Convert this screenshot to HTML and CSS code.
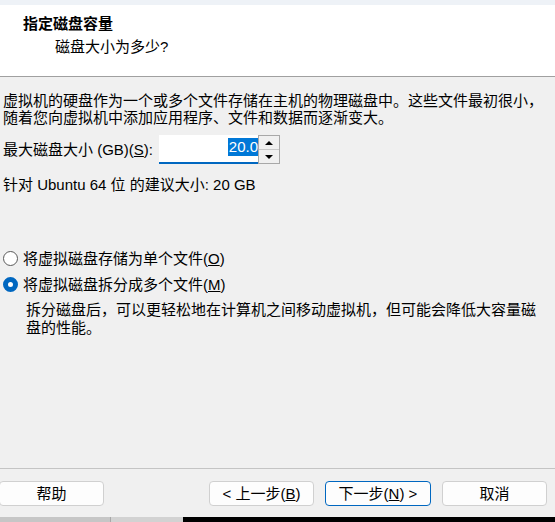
FILE: index.html
```html
<!DOCTYPE html>
<html lang="zh-CN">
<head>
<meta charset="utf-8">
<title>指定磁盘容量</title>
<link rel="stylesheet" href="styles.css">
</head>
<body>
<div class="dialog">
  <div class="topstrip"></div>
  <div class="header">
    <div class="title">指定磁盘容量</div>
    <div class="subtitle">磁盘大小为多少?</div>
  </div>
  <div class="content">
    <p class="para">虚拟机的硬盘作为一个或多个文件存储在主机的物理磁盘中。这些文件最初很小，<br>随着您向虚拟机中添加应用程序、文件和数据而逐渐变大。</p>
    <div class="spinrow">
      <span class="spinlabel">最大磁盘大小 (GB)(<u>S</u>):</span>
      <div class="spin">
        <div class="spininput"><span class="sel">20.0</span></div>
        <div class="spinbtns">
          <div class="spinbtn"><span class="tri up"></span></div>
          <div class="spinbtn"><span class="tri down"></span></div>
        </div>
      </div>
    </div>
    <p class="rec">针对 Ubuntu 64 位 的建议大小: 20 GB</p>
    <div class="radios">
      <label class="radio"><span class="dot"></span><span>将虚拟磁盘存储为单个文件(<u>O</u>)</span></label>
      <label class="radio"><span class="dot on"></span><span>将虚拟磁盘拆分成多个文件(<u>M</u>)</span></label>
      <p class="desc">拆分磁盘后，可以更轻松地在计算机之间移动虚拟机，但可能会降低大容量磁<br>盘的性能。</p>
    </div>
  </div>
  <div class="footer">
    <button class="btn help">帮助</button>
    <div class="navbtns">
      <button class="btn">&lt; 上一步(<u>B</u>)</button>
      <button class="btn default">下一步(<u>N</u>) &gt;</button>
      <button class="btn">取消</button>
    </div>
  </div>
</div>
<div class="taskstrip">
  <div class="seg a"></div>
  <div class="seg b"></div>
  <div class="seg c"></div>
</div>
</body>
</html>
```

FILE: styles.css
```css
html, body {
  margin: 0;
  padding: 0;
}
body {
  width: 555px;
  height: 522px;
  overflow: hidden;
  background: #f0f0f0;
  font-family: "Liberation Sans", "Noto Sans CJK SC", sans-serif;
  font-size: 15px;
  color: #000;
}
.dialog {
  height: 517px;
  display: flex;
  flex-direction: column;
}
.topstrip {
  height: 5px;
  background: #eef2f7;
}
.header {
  height: 72px;
  background: #fff;
  border-bottom: 1px solid #a0a0a0;
  box-sizing: border-box;
  padding-top: 9px;
}
.title {
  font-weight: bold;
  line-height: 20px;
  padding-left: 23px;
}
.subtitle {
  line-height: 20px;
  margin-top: 3px;
  padding-left: 55px;
}
.content {
  flex: 1;
  padding-left: 3px;
}
.para {
  margin: 15px 0 0 0;
  line-height: 17px;
}
.spinrow {
  display: flex;
  align-items: center;
  margin-top: 9px;
}
.spinlabel {
  width: 156px;
  line-height: 17px;
}
.spin {
  display: flex;
}
.spininput {
  width: 99px;
  height: 29px;
  box-sizing: border-box;
  background: #fff;
  border-bottom: 2px solid #0067c0;
  display: flex;
  justify-content: flex-end;
  align-items: flex-start;
  padding-top: 3px;
}
.sel {
  background: #0078d7;
  color: #fff;
  line-height: 18px;
  padding: 0 0 0 1px;
}
.spinbtns {
  width: 22px;
  height: 29px;
  box-sizing: border-box;
  border: 1px solid #a8a8a8;
  display: flex;
  flex-direction: column;
}
.spinbtn {
  flex: 1;
  display: flex;
  align-items: center;
  justify-content: center;
  background: #f0f0f0;
}
.spinbtn + .spinbtn {
  border-top: 1px solid #c8c8c8;
}
.tri {
  width: 0;
  height: 0;
  border-left: 4px solid transparent;
  border-right: 4px solid transparent;
}
.tri.up {
  border-bottom: 4px solid #000;
}
.tri.down {
  border-top: 4px solid #000;
}
.rec {
  margin: 12px 0 0 0;
  line-height: 17px;
}
.radios {
  margin-top: 52px;
}
.radio {
  display: flex;
  align-items: center;
  gap: 5px;
  height: 26px;
  line-height: 17px;
}
.dot {
  width: 15px;
  height: 15px;
  box-sizing: border-box;
  border: 1px solid #5a5a5a;
  border-radius: 50%;
  background: #fff;
  flex: none;
}
.dot.on {
  border: 5px solid #0067c0;
  background: #fff;
}
.desc {
  margin: 4px 0 0 23px;
  line-height: 18px;
}
.footer {
  border-top: 1px solid #c4c4c4;
  padding: 12px 8px 11px 0;
  display: flex;
  justify-content: space-between;
}
.navbtns {
  display: flex;
  gap: 11px;
}
.btn {
  height: 25px;
  width: 105px;
  box-sizing: border-box;
  background: #fdfdfd;
  border: 1px solid #d0d0d0;
  border-radius: 4px;
  font-family: "Liberation Sans", "Noto Sans CJK SC", sans-serif;
  font-size: 15px;
  line-height: 17px;
  padding: 0;
  color: #000;
}
.btn.help {
  margin-left: -1px;
}
.btn.default {
  border-color: #0067c0;
  width: 106px;
}
.taskstrip {
  height: 5px;
  display: flex;
}
.seg.a {
  width: 110px;
  background: #c6c6c6;
  border-right: 1px solid #a8a8a8;
}
.seg.b {
  width: 72px;
  background: #d2d2d2;
}
.seg.c {
  flex: 1;
  background: #000;
}
```
